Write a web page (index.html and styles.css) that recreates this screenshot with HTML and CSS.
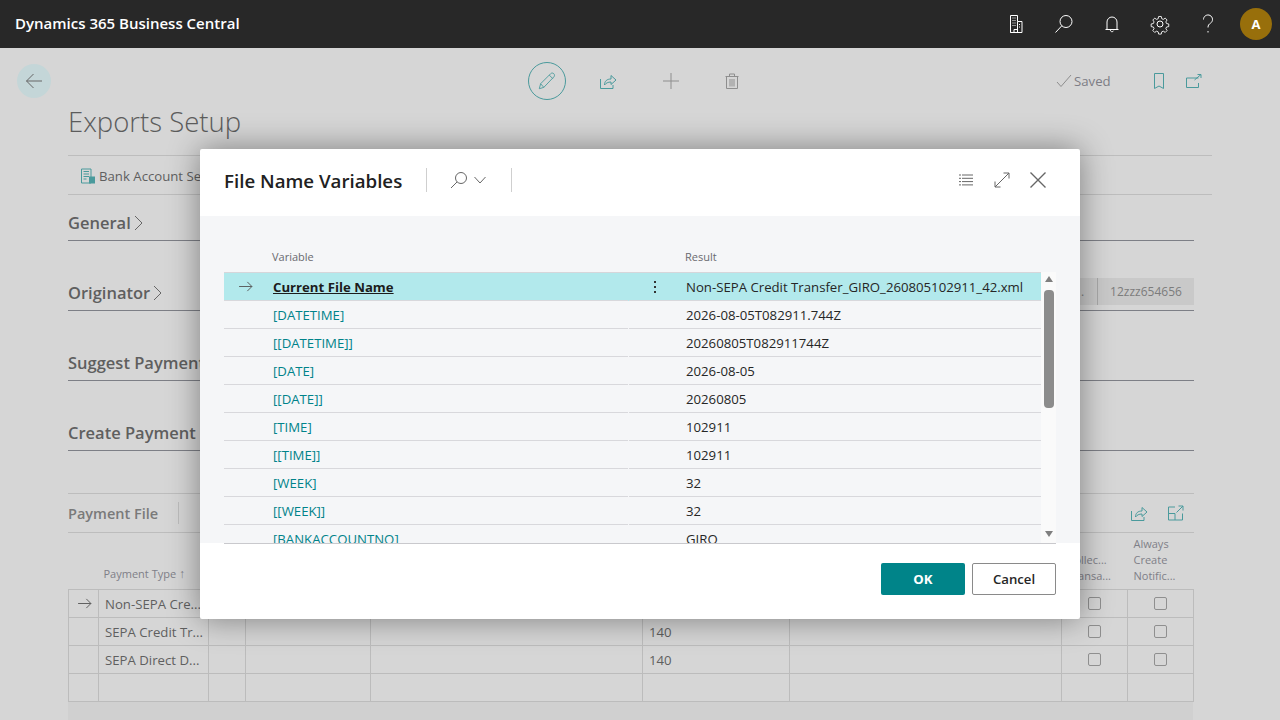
FILE: index.html
```html
<!DOCTYPE html>
<html lang="en">
<head>
    <meta charset="UTF-8">
    <meta name="viewport" content="width=device-width, initial-scale=1.0">
    <title>File Name Variables</title>
    <link rel="stylesheet" href="styles.css">
</head>
<body>
    <header class="topbar">
        <div class="brand">Dynamics 365 Business Central</div>
        <div class="topbar-icons">
            <svg class="top-icon" viewBox="0 0 24 24"><path d="M6.500 20.500V3.500h7v6h4.500v11zM13.500 9.500v11M10 20.500v-3h3.500v3M6.500 20.500H18"/><path class="dots" d="M8.500 6h3M8.500 8.500h3M8.500 11h3M8.500 13.500h3M15 12.500h1.500M15 15h1.500"/></svg>
            <svg class="top-icon" viewBox="0 0 24 24"><circle cx="14" cy="9.500" r="6"/><path d="M9.800 13.800L3.500 20.500"/></svg>
            <svg class="top-icon" viewBox="0 0 24 24"><path d="M7 17.500V10a5 5 0 0 1 10 0v7.500M5.500 17.500h13M10.500 17.500a1.600 1.600 0 0 0 3 1.200"/></svg>
            <svg class="top-icon" viewBox="0 0 24 24"><circle cx="12" cy="12" r="3"/><path d="M10.500 3.500h3l.5 2.500 1.800.8 2.200-1.400 2.100 2.100-1.400 2.200.8 1.800 2.500.5v3l-2.500.5-.8 1.800 1.400 2.200-2.100 2.100-2.200-1.400-1.800.8-.5 2.500h-3l-.5-2.500-1.800-.8-2.200 1.400-2.100-2.100 1.400-2.200-.8-1.800-2.500-.5v-3l2.500-.5.8-1.800-1.400-2.200 2.100-2.100 2.200 1.400 1.800-.8z" transform="translate(1.400 1.400) scale(.88)"/></svg>
            <svg class="top-icon" viewBox="0 0 24 24"><path d="M7.500 7.500a4.500 4.500 0 1 1 7 3.700c-1.500 1-2.500 2-2.500 4.300M12 19v1.500"/></svg>
            <div class="avatar">A</div>
        </div>
    </header>

    <main class="page">
        <div class="actions">
            <button class="back-btn">
                <svg viewBox="0 0 20 20"><path d="M18 10H2.500M9.500 3l-7 7 7 7"/></svg>
            </button>
            <div class="action-group">
                <span class="edit-ring">
                    <svg class="teal-icon" viewBox="0 0 22 22"><path d="M2.500 19.500l1.500-5.500L15 3c1-1 2.500-1 3.500 0s1 2.500 0 3.500L7.500 18z M13.500 4.500l4 4M4 14l3.500 4"/></svg>
                </span>
                <svg class="teal-icon action-share" viewBox="0 0 18 18"><path d="M1.500 7v9.500h12.500V13M5.500 13c0-4 2.500-6 6.500-6V3.500L17 8l-5 4.500V10c-3 0-5 1-6.500 3z"/></svg>
                <svg class="grey-icon action-add" viewBox="0 0 18 18"><path d="M9 1v16M1 9h16"/></svg>
                <svg class="grey-icon action-del" viewBox="0 0 18 18"><path d="M3.500 4.500h11v12h-11zM2.500 4.500h13M6.500 4.500V2h5v2.500M7 7v7.500M9 7v7.500M11 7v7.500"/></svg>
            </div>
            <div class="status">
                <svg class="grey-icon check" viewBox="0 0 16 16"><path d="M1 9l4 4.500L15 2"/></svg>
                <span>Saved</span>
            </div>
            <svg class="teal-icon action-mark" viewBox="0 0 18 18"><path d="M4.500 1.500h9v15L9 14l-4.500 2.500z"/></svg>
            <svg class="teal-icon action-open" viewBox="0 0 18 18"><path d="M13.500 6H1.500v9.500h12V11M9.500 8l6.500-5.500M12.500 2.500H16v3.500"/></svg>
        </div>

        <div class="content">
            <h1 class="page-title">Exports Setup</h1>
            <nav class="page-nav">
                <svg class="teal-icon nav-icon" viewBox="0 0 16 16"><path d="M1.500 1h9.500v14H1.500zM3.500 3.500h5.500M3.500 6h5.500M3.500 8.500h5.500M3.500 11h3"/><rect class="fill-icon" x="9" y="8.500" width="6" height="7"/></svg>
                <span>Bank Account Setup</span>
            </nav>

            <section class="fasttab first-tab"><h2>General <svg class="tab-chev" viewBox="0 0 9 16"><path d="M1 1l7 7-7 7"/></svg></h2></section>
            <section class="fasttab">
                <h2>Originator <svg class="tab-chev" viewBox="0 0 9 16"><path d="M1 1l7 7-7 7"/></svg></h2>
                <div class="tab-field"><span>.</span><span>12zzz654656</span></div>
            </section>
            <section class="fasttab"><h2>Suggest Payments</h2></section>
            <section class="fasttab"><h2>Create Payment File</h2></section>

            <div class="part-bar">
                <span class="part-title">Payment File</span>
                <span class="part-divider"></span>
                <span class="part-icons">
                    <svg class="teal-icon" viewBox="0 0 18 18"><path d="M1.500 7v9.500h12.500V13M5.500 13c0-4 2.500-6 6.500-6V3.500L17 8l-5 4.500V10c-3 0-5 1-6.500 3z"/></svg>
                    <svg class="teal-icon" viewBox="0 0 18 18"><path d="M8 3H1.500v13h14V9.500M1.500 9.500H8V16M9.500 8.500L16 2M11.500 2H16v4.500"/></svg>
                </span>
            </div>

            <table class="part-table">
                <colgroup>
                    <col class="c-mark"><col class="c-type"><col class="c-a"><col class="c-b"><col class="c-c"><col class="c-d"><col class="c-e"><col class="c-f"><col class="c-g">
                </colgroup>
                <thead>
                    <tr>
                        <th></th>
                        <th class="type-head">Payment Type <span class="sort">&#8593;</span></th>
                        <th></th><th></th><th></th><th></th><th></th>
                        <th>Collec...<br>Transa...</th>
                        <th>Always<br>Create<br>Notific...</th>
                    </tr>
                </thead>
                <tbody>
                    <tr>
                        <td class="mark"><svg class="arrow-icon" viewBox="0 0 16 12"><path d="M1 6h14M10 1l5 5-5 5"/></svg></td>
                        <td>Non-SEPA Cre...</td><td></td><td></td><td></td><td></td><td></td>
                        <td class="tick"><span class="box"></span></td><td class="tick"><span class="box"></span></td>
                    </tr>
                    <tr>
                        <td></td><td>SEPA Credit Tr...</td><td></td><td></td><td></td><td>140</td><td></td>
                        <td class="tick"><span class="box"></span></td><td class="tick"><span class="box"></span></td>
                    </tr>
                    <tr>
                        <td></td><td>SEPA Direct D...</td><td></td><td></td><td></td><td>140</td><td></td>
                        <td class="tick"><span class="box"></span></td><td class="tick"><span class="box"></span></td>
                    </tr>
                    <tr><td></td><td></td><td></td><td></td><td></td><td></td><td></td><td></td><td></td></tr>
                </tbody>
            </table>
            <div class="table-tail"></div>
        </div>
    </main>

    <div class="modal">
        <div class="modal-head">
            <h2 class="modal-title">File Name Variables</h2>
            <div class="modal-search">
                <svg class="line-icon search-icon" viewBox="0 0 18 18"><circle cx="11" cy="7" r="5.500"/><path d="M7 11l-6 6"/></svg>
                <svg class="line-icon chev-icon" viewBox="0 0 12 8"><path d="M.5 1l5.500 6 5.500-6"/></svg>
            </div>
            <div class="modal-tools">
                <svg class="line-icon tool-list" viewBox="0 0 14 12"><path d="M0 1h2M3 1h11M0 4.300h2M3 4.300h11M0 7.600h2M3 7.600h11M0 10.900h2M3 10.900h11"/></svg>
                <svg class="line-icon tool-expand" viewBox="0 0 16 16"><path d="M1 15L15 1M9.500 1H15v5.500M1 9.500V15h5.500"/></svg>
                <svg class="line-icon tool-close" viewBox="0 0 16 16"><path d="M.5 .5l15 15M15.500 .5l-15 15"/></svg>
            </div>
        </div>

        <div class="modal-body">
            <div class="list-head">
                <span class="head-var">Variable</span>
                <span>Result</span>
            </div>
            <div class="list-wrap">
                <div class="list">
                    <div class="row selected">
                        <div class="cell cell-mark"><svg class="arrow-icon" viewBox="0 0 16 12"><path d="M1 6h14M10 1l5 5-5 5"/></svg></div>
                        <div class="cell cell-var"><a class="key-link">Current File Name</a></div>
                        <div class="cell cell-menu"><span class="kebab"></span></div>
                        <div class="cell cell-res">Non-SEPA Credit Transfer_GIRO_260805102911_42.xml</div>
                    </div>
                    <div class="row"><div class="cell cell-mark"></div><div class="cell cell-var">[DATETIME]</div><div class="cell cell-menu"></div><div class="cell cell-res">2026-08-05T082911.744Z</div></div>
                    <div class="row"><div class="cell cell-mark"></div><div class="cell cell-var">[[DATETIME]]</div><div class="cell cell-menu"></div><div class="cell cell-res">20260805T082911744Z</div></div>
                    <div class="row"><div class="cell cell-mark"></div><div class="cell cell-var">[DATE]</div><div class="cell cell-menu"></div><div class="cell cell-res">2026-08-05</div></div>
                    <div class="row"><div class="cell cell-mark"></div><div class="cell cell-var">[[DATE]]</div><div class="cell cell-menu"></div><div class="cell cell-res">20260805</div></div>
                    <div class="row"><div class="cell cell-mark"></div><div class="cell cell-var">[TIME]</div><div class="cell cell-menu"></div><div class="cell cell-res">102911</div></div>
                    <div class="row"><div class="cell cell-mark"></div><div class="cell cell-var">[[TIME]]</div><div class="cell cell-menu"></div><div class="cell cell-res">102911</div></div>
                    <div class="row"><div class="cell cell-mark"></div><div class="cell cell-var">[WEEK]</div><div class="cell cell-menu"></div><div class="cell cell-res">32</div></div>
                    <div class="row"><div class="cell cell-mark"></div><div class="cell cell-var">[[WEEK]]</div><div class="cell cell-menu"></div><div class="cell cell-res">32</div></div>
                    <div class="row"><div class="cell cell-mark"></div><div class="cell cell-var">[BANKACCOUNTNO]</div><div class="cell cell-menu"></div><div class="cell cell-res">GIRO</div></div>
                </div>
                <div class="scrollbar">
                    <span class="scroll-up"></span>
                    <span class="scroll-thumb"></span>
                    <span class="scroll-down"></span>
                </div>
            </div>
        </div>

        <div class="modal-foot">
            <button class="btn btn-ok">OK</button>
            <button class="btn btn-cancel">Cancel</button>
        </div>
    </div>
</body>
</html>
```

FILE: styles.css
```css
* {
    box-sizing: border-box;
}
html, body {
    height: 720px;
    overflow: hidden;
}
body {
    margin: 0;
    background: #d6d6d6;
    font-family: "Open Sans", Roboto, sans-serif;
    font-size: 13.200px;
    color: #5f5f5f;
}
svg {
    display: block;
    fill: none;
    stroke: currentColor;
    stroke-width: 1;
}
button {
    font-family: inherit;
}

/* top bar */
.topbar {
    display: flex;
    align-items: center;
    justify-content: space-between;
    height: 48px;
    padding: 0 8px 0 15px;
    background: #282828;
    color: #fff;
}
.brand {
    margin-top: -3px;
    font-size: 15px;
    font-weight: 600;
}
.topbar-icons {
    display: flex;
    align-items: center;
    gap: 24px;
}
.top-icon {
    width: 24px;
    height: 24px;
    color: #fff;
}
.top-icon .dots {
    stroke-dasharray: 1 1;
}
.avatar {
    display: flex;
    align-items: center;
    justify-content: center;
    width: 32px;
    height: 32px;
    margin-left: -4px;
    border-radius: 50%;
    background: #986f0b;
    font-size: 13px;
    font-weight: 700;
}

/* page under the dialog */
.actions {
    display: flex;
    align-items: center;
    height: 38px;
    margin-top: 14px;
    padding-left: 17px;
}
.back-btn {
    display: flex;
    align-items: center;
    justify-content: center;
    width: 34px;
    height: 34px;
    padding: 0;
    border: 0;
    border-radius: 50%;
    background: #c4d6d8;
    color: #666;
}
.back-btn svg {
    width: 20px;
    height: 20px;
}
.action-group {
    display: flex;
    align-items: center;
    margin-left: 477px;
}
.edit-ring {
    display: flex;
    align-items: center;
    justify-content: center;
    width: 38px;
    height: 38px;
    border: 1px solid #4a9a9c;
    border-radius: 50%;
}
.edit-ring svg {
    width: 20px;
    height: 20px;
}
.teal-icon {
    width: 18px;
    height: 18px;
    color: #4a9a9c;
}
.grey-icon {
    width: 18px;
    height: 18px;
    color: #8e8e8e;
}
.action-share {
    margin-left: 33px;
}
.action-add {
    margin-left: 45px;
}
.action-del {
    margin-left: 43px;
}
.status {
    display: flex;
    align-items: center;
    gap: 2px;
    margin-left: 315px;
    color: #7d7d85;
}
.check {
    width: 16px;
    height: 16px;
}
.action-mark {
    margin-left: 39px;
}
.action-open {
    margin-left: 17px;
}
.content {
    padding-left: 68px;
}
.page-title {
    height: 55px;
    margin: 0;
    padding-top: 3px;
    font-size: 27.500px;
    font-weight: 300;
    line-height: 38px;
    color: #5c5c5c;
}
.page-nav {
    display: flex;
    align-items: center;
    gap: 3px;
    width: 1144px;
    height: 40px;
    padding: 1px 0 0 12px;
    border-top: 1px solid #bdbdbd;
    border-bottom: 1px solid #bdbdbd;
}
.nav-icon {
    width: 16px;
    height: 16px;
}
.fill-icon {
    fill: #4a9a9c;
    stroke: none;
}
.fasttab {
    display: flex;
    align-items: flex-end;
    justify-content: space-between;
    width: 1126px;
    height: 70px;
    padding-bottom: 6px;
    border-bottom: 1px solid #7d7f86;
}
.first-tab {
    height: 46px;
}
.fasttab h2 {
    display: flex;
    align-items: center;
    gap: 3px;
    margin: 0;
    font-size: 16.500px;
    font-weight: 600;
    line-height: 22px;
    color: #5f5f5f;
}
.tab-chev {
    width: 9px;
    height: 16px;
    color: #666;
}
.tab-field {
    display: flex;
    height: 27px;
    margin-bottom: -1px;
    background: #c9c9c9;
    font-size: 12px;
    line-height: 27px;
    color: #7c7c7c;
}
.tab-field span:first-child {
    width: 17px;
    padding-left: 1px;
}
.tab-field span:last-child {
    width: 97px;
    border-left: 1px solid #a9a9a9;
    text-align: center;
}
.part-bar {
    display: flex;
    align-items: center;
    width: 1126px;
    height: 40px;
    margin-top: 42px;
    border-top: 1px solid #bdbdbd;
    border-bottom: 1px solid #bdbdbd;
}
.part-title {
    font-size: 14.500px;
    font-weight: 600;
    color: #7a7a7a;
}
.part-divider {
    width: 1px;
    height: 22px;
    margin-left: 20px;
    background: #bdbdbd;
}
.part-icons {
    display: flex;
    gap: 19px;
    margin-left: auto;
    padding-right: 9px;
}
.part-table {
    width: 1125px;
    border-collapse: collapse;
    table-layout: fixed;
}
.c-mark { width: 30px; }
.c-type { width: 110px; }
.c-a { width: 37px; }
.c-b { width: 125px; }
.c-c { width: 272px; }
.c-d { width: 147px; }
.c-e { width: 272px; }
.c-f { width: 66px; }
.c-g { width: 66px; }
.part-table th {
    height: 56px;
    padding: 0 0 5px 6px;
    font-size: 11px;
    font-weight: 400;
    line-height: 16px;
    color: #7f7f88;
    text-align: left;
    vertical-align: bottom;
}
.part-table .type-head {
    padding: 0 0 7px 5px;
}
.sort {
    font-size: 12px;
}
.part-table td {
    height: 28px;
    padding: 1px 0 0 6px;
    border: 1px solid #bcbcbc;
    white-space: nowrap;
    overflow: hidden;
}
.part-table .mark {
    padding-left: 8px;
}
.part-table .tick {
    padding: 0;
}
.box {
    display: block;
    width: 13px;
    height: 13px;
    margin: 0 auto;
    border: 1px solid #8f8f8f;
    border-radius: 2px;
}
.table-tail {
    width: 1125px;
    height: 20px;
    background: #d0d0d0;
}
.arrow-icon {
    width: 15px;
    height: 11px;
    color: #555;
}

/* dialog, lies over the page */
.modal {
    position: absolute;
    top: 149px;
    left: 200px;
    display: flex;
    flex-direction: column;
    width: 880px;
    height: 470px;
    border-radius: 2px;
    background: #fff;
    box-shadow: 0 0 32px rgba(0, 0, 0, 0.42);
}
.modal-head {
    display: flex;
    align-items: center;
    height: 67px;
    padding: 0 34px 5px 24px;
}
.modal-title {
    width: 202px;
    margin: 0;
    font-size: 18.700px;
    font-weight: 600;
    color: #212121;
}
.modal-search {
    display: flex;
    align-items: center;
    gap: 6px;
    width: 86px;
    height: 24px;
    padding-left: 23px;
    border-left: 1px solid #cfcfcf;
    border-right: 1px solid #cfcfcf;
}
.line-icon {
    color: #666;
}
.search-icon {
    width: 18px;
    height: 18px;
}
.chev-icon {
    width: 12px;
    height: 8px;
}
.modal-tools {
    display: flex;
    align-items: center;
    margin-left: auto;
}
.tool-list {
    width: 14px;
    height: 12px;
}
.tool-expand {
    width: 16px;
    height: 16px;
    margin-left: 21px;
}
.tool-close {
    width: 16px;
    height: 16px;
    margin-left: 20px;
    stroke-width: 1.400;
}
.modal-body {
    height: 327px;
    padding: 0 24px;
    background: #f5f6f8;
}
.list-head {
    display: flex;
    height: 56px;
    padding-top: 33px;
    font-size: 11px;
    line-height: 16px;
    color: #6a6a70;
}
.head-var {
    width: 461px;
    padding-left: 48px;
}
.list-wrap {
    display: flex;
    height: 272px;
    border-bottom: 1px solid #c9c9cd;
}
.list {
    width: 817px;
    overflow: hidden;
    border-top: 1px solid #d6d6da;
}
.row {
    display: flex;
    height: 28px;
}
.cell {
    height: 28px;
    line-height: 29px;
    border-bottom: 1px solid #d8d8dc;
    white-space: nowrap;
}
.cell-mark {
    display: flex;
    align-items: center;
    width: 48px;
    padding-left: 14px;
}
.cell-var {
    width: 356px;
    padding-left: 1px;
    color: #00838a;
}
.cell-menu {
    display: flex;
    align-items: center;
    width: 52px;
    margin-left: 1px;
    padding-left: 25px;
}
.cell-res {
    flex: 1;
    padding-left: 5px;
    color: #262626;
}
.selected {
    background: #b2e9ec;
}
.key-link {
    font-weight: 700;
    color: #1c1c1c;
    text-decoration: underline;
}
.kebab {
    width: 2px;
    height: 2px;
    background: #333;
    box-shadow: 0 -5px 0 #333, 0 5px 0 #333;
}
.scrollbar {
    display: flex;
    flex-direction: column;
    align-items: center;
    width: 15px;
    padding: 4px 0 6px;
    background: #fafafa;
}
.scroll-up {
    width: 0;
    height: 0;
    border: 4px solid transparent;
    border-top: 0;
    border-bottom: 6px solid #7f7f7f;
}
.scroll-thumb {
    width: 10px;
    height: 118px;
    margin-top: 8px;
    border-radius: 4px;
    background: #8c8c8c;
}
.scroll-down {
    width: 0;
    height: 0;
    margin-top: auto;
    border: 4px solid transparent;
    border-bottom: 0;
    border-top: 6px solid #7f7f7f;
}
.modal-foot {
    display: flex;
    justify-content: flex-end;
    gap: 7px;
    flex: 1;
    padding: 20px 24px 0 0;
}
.btn {
    width: 84px;
    height: 32px;
    padding: 0;
    border-radius: 2px;
    font-size: 13.200px;
}
.btn-ok {
    border: 0;
    background: #008489;
    font-weight: 700;
    color: #fff;
}
.btn-cancel {
    border: 1px solid #8a8a8a;
    background: #fff;
    font-weight: 600;
    color: #262626;
}
```
